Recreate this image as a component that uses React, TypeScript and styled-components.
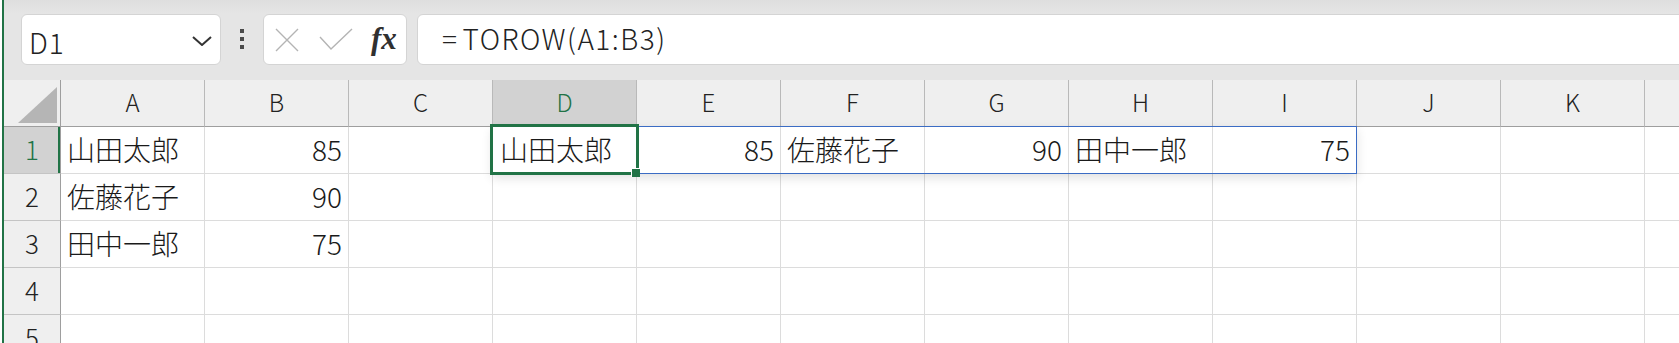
import React from 'react';
import styled, { createGlobalStyle } from 'styled-components';

const COL_W = 144;
const ROW_H = 47;
const GREEN = '#217346';
const FONT = `"Noto Sans CJK JP", "Noto Sans", sans-serif`;

const columns = ['A', 'B', 'C', 'D', 'E', 'F', 'G', 'H', 'I', 'J', 'K', 'L'];
const rows = [1, 2, 3, 4, 5];

const values: Record<string, string | number> = {
  A1: '山田太郎',
  B1: 85,
  A2: '佐藤花子',
  B2: 90,
  A3: '田中一郎',
  B3: 75,
  D1: '山田太郎',
  E1: 85,
  F1: '佐藤花子',
  G1: 90,
  H1: '田中一郎',
  I1: 75,
};

const activeCol = 'D';
const activeRow = 1;
const spillCols = 6;

const GlobalStyle = createGlobalStyle`
  html, body {
    margin: 0;
    padding: 0;
    background: #ffffff;
    overflow: hidden;
  }
  body {
    font-family: ${FONT};
    font-weight: 300;
  }
`;

const App = () => {
  return (
    <>
      <GlobalStyle />
      <Window>
        <Toolbar>
          <NameBox>
            <NameText>D1</NameText>
            <svg width="20" height="10" viewBox="0 0 20 10">
              <polyline points="1,1 10,9 19,1" fill="none" stroke="#333" strokeWidth="2" />
            </svg>
          </NameBox>
          <Grip>
            <i />
            <i />
            <i />
          </Grip>
          <FxBox>
            <svg width="24" height="24" viewBox="0 0 24 24">
              <path d="M1 1 L23 23 M23 1 L1 23" stroke="#b4b4b4" strokeWidth="1.4" fill="none" />
            </svg>
            <svg width="34" height="23" viewBox="0 0 34 23">
              <polyline points="1,9 12,21 33,1" stroke="#b4b4b4" strokeWidth="1.4" fill="none" />
            </svg>
            <FxLabel>fx</FxLabel>
          </FxBox>
          <FormulaBar>
            <Equals>=</Equals>TOROW(A1:B3)
          </FormulaBar>
        </Toolbar>

        <Sheet>
          <Corner>
            <CornerMark />
          </Corner>
          {columns.map((c) => (
            <ColHeader key={c} $active={c === activeCol}>
              {c}
            </ColHeader>
          ))}
          {rows.map((r) => (
            <React.Fragment key={r}>
              <RowHeader $active={r === activeRow}>{r}</RowHeader>
              {columns.map((c) => {
                const v = values[`${c}${r}`];
                const isActive = c === activeCol && r === activeRow;
                return (
                  <Cell key={c} $num={typeof v === 'number'} $anchor={isActive}>
                    {v}
                    {isActive && (
                      <>
                        <SpillFrame style={{ width: spillCols * COL_W + 1 }} />
                        <SelectFrame />
                        <FillHandle />
                      </>
                    )}
                  </Cell>
                );
              })}
            </React.Fragment>
          ))}
        </Sheet>
      </Window>
    </>
  );
};

export default App;

const Window = styled.div`
  margin-left: 2px;
  border-left: 2px solid ${GREEN};
  height: 343px;
  overflow: hidden;
  background: #ffffff;
`;

const Toolbar = styled.div`
  height: 80px;
  box-sizing: border-box;
  display: flex;
  align-items: flex-start;
  padding: 14px 0 0 17px;
  background: #e5e5e5;
  background-image: linear-gradient(#dedede, #e5e5e5 14px);
`;

const Box = styled.div`
  height: 51px;
  box-sizing: border-box;
  background: #ffffff;
  border: 1px solid #d4d4d4;
  border-radius: 6px;
  display: flex;
  align-items: center;
`;

const NameBox = styled(Box)`
  width: 200px;
  padding: 0 8px 0 7px;
  justify-content: space-between;

  svg {
    margin-top: 2px;
  }
`;

const NameText = styled.span`
  font-size: 28px;
  color: #222;
  margin-top: 5px;
  letter-spacing: 1px;
`;

const Grip = styled.div`
  width: 4px;
  margin: 15px 19px 0;
  display: flex;
  flex-direction: column;
  gap: 4px;

  i {
    display: block;
    width: 4px;
    height: 4px;
    background: #4a4a4a;
  }
`;

const FxBox = styled(Box)`
  width: 144px;
  padding-left: 11px;
  gap: 19px;

  svg:nth-child(2) {
    margin-left: 1px;
  }
`;

const FxLabel = styled.span`
  font-family: "Liberation Serif", serif;
  font-style: italic;
  font-weight: 700;
  font-size: 31px;
  color: #303030;
  margin-left: -1px;
  margin-top: -2px;
`;

const FormulaBar = styled(Box)`
  flex: 1;
  margin: 0 -10px 0 10px;
  padding: 0 0 3px 24px;
  font-size: 28px;
  color: #222;
  letter-spacing: 1.5px;
  border-radius: 6px 0 0 6px;
  white-space: pre;
`;

const Equals = styled.span`
  margin-right: 4px;
`;

const Sheet = styled.div`
  display: grid;
  grid-template-columns: 57px repeat(${columns.length}, ${COL_W}px);
  grid-auto-rows: ${ROW_H}px;
  font-family: ${FONT};
`;

const Corner = styled.div`
  background: #efefef;
  border-right: 1px solid #9e9e9e;
  border-bottom: 1px solid #9e9e9e;
  display: flex;
  justify-content: flex-end;
  align-items: flex-end;
  padding: 0 3px 3px 0;
`;

const CornerMark = styled.div`
  width: 39px;
  height: 36px;
  background: #b5b5b5;
  clip-path: polygon(100% 0, 100% 100%, 0 100%);
`;

const ColHeader = styled.div<{ $active?: boolean }>`
  background: ${(p) => (p.$active ? '#d2d2d2' : '#efefef')};
  color: ${(p) => (p.$active ? GREEN : '#222')};
  border-right: 1px solid #b9b9b9;
  border-bottom: 1px solid #9e9e9e;
  font-size: 24px;
  display: flex;
  align-items: center;
  justify-content: center;
  padding-bottom: 3px;
  box-sizing: border-box;
`;

const RowHeader = styled.div<{ $active?: boolean }>`
  background: ${(p) => (p.$active ? '#d2d2d2' : '#efefef')};
  color: ${(p) => (p.$active ? GREEN : '#222')};
  border-right: 1px solid #9e9e9e;
  border-bottom: 1px solid #c4c4c4;
  box-shadow: ${(p) => (p.$active ? `inset -2px 0 0 ${GREEN}` : 'none')};
  font-size: 26px;
  display: flex;
  align-items: center;
  justify-content: center;
  padding-bottom: 4px;
  box-sizing: border-box;
`;

const Cell = styled.div<{ $num?: boolean; $anchor?: boolean }>`
  position: ${(p) => (p.$anchor ? 'relative' : 'static')};
  border-right: 1px solid #dcdcdc;
  border-bottom: 1px solid #dcdcdc;
  font-size: 28px;
  color: #1a1a1a;
  display: flex;
  align-items: center;
  justify-content: ${(p) => (p.$num ? 'flex-end' : 'flex-start')};
  padding: 0 6px 3px ${(p) => (p.$anchor ? 7 : 6)}px;
  box-sizing: border-box;
  white-space: nowrap;
  background: #ffffff;
`;

const SpillFrame = styled.div`
  position: absolute;
  left: -1px;
  top: -1px;
  height: ${ROW_H + 1}px;
  box-sizing: border-box;
  border: 1px solid #3b6cc4;
  box-shadow: 0 4px 10px rgba(0, 0, 0, 0.12);
  pointer-events: none;
  z-index: 2;
`;

const SelectFrame = styled.div`
  position: absolute;
  inset: -3px -3px -2px -3px;
  border: 3px solid ${GREEN};
  pointer-events: none;
  z-index: 3;
`;

const FillHandle = styled.div`
  position: absolute;
  right: -4px;
  bottom: -4px;
  width: 8px;
  height: 8px;
  background: ${GREEN};
  border: 1px solid #ffffff;
  border-right: none;
  border-bottom: none;
  z-index: 4;
`;
